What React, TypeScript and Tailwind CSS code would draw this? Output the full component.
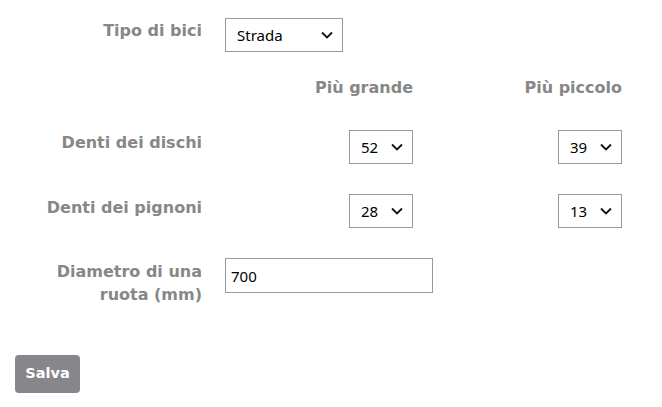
import React from "react";

function Chevron() {
  return (
    <svg
      className="pointer-events-none absolute right-[10px] top-1/2 -translate-y-1/2"
      width="12"
      height="8"
      viewBox="0 0 12 8"
      fill="none"
    >
      <path d="M1 1.5l5 5 5-5" stroke="#111" strokeWidth="1.8" />
    </svg>
  );
}

function Select({ value, options, width }: { value: string; options: string[]; width: string }) {
  return (
    <div className={`relative inline-block ${width}`}>
      <select
        defaultValue={value}
        className="h-[34px] w-full appearance-none border border-[#999] bg-white pl-[11px] pr-8 text-[15px] text-black outline-none"
      >
        {options.map((o) => (
          <option key={o}>{o}</option>
        ))}
      </select>
      <Chevron />
    </div>
  );
}

const label =
  "text-right pr-[23px] text-[16px] font-bold leading-[18px] text-[#878787] font-['DejaVu_Sans',sans-serif]";

export default function App() {
  return (
    <div className="min-h-screen bg-white pt-[18px] font-['Noto_Sans',sans-serif]">
      <div className="flex">
        <div className={`w-[225px] pt-[4px] ${label}`}>Tipo di bici</div>
        <Select value="Strada" options={["Strada", "Montagna", "Città"]} width="w-[118px]" />
      </div>

      <div className="mt-[27px] flex font-['DejaVu_Sans',sans-serif] text-[16px] font-bold leading-[18px] text-[#878787]">
        <div className="w-[225px]" />
        <div className="w-[188px] text-right">Più grande</div>
        <div className="w-[209px] text-right">Più piccolo</div>
      </div>

      <div className="mt-[33px] flex">
        <div className={`w-[225px] pt-[4px] ${label}`}>Denti dei dischi</div>
        <div className="flex w-[188px] justify-end">
          <Select value="52" options={["52", "53", "50"]} width="w-[64px]" />
        </div>
        <div className="flex w-[209px] justify-end">
          <Select value="39" options={["39", "36", "34"]} width="w-[64px]" />
        </div>
      </div>

      <div className="mt-[30px] flex">
        <div className={`w-[225px] pt-[5px] ${label}`}>Denti dei pignoni</div>
        <div className="flex w-[188px] justify-end">
          <Select value="28" options={["28", "25", "23"]} width="w-[64px]" />
        </div>
        <div className="flex w-[209px] justify-end">
          <Select value="13" options={["13", "11", "12"]} width="w-[64px]" />
        </div>
      </div>

      <div className="mt-[30px] flex">
        <div className={`w-[225px] pt-[2px] ${label} leading-[23px]`}>
          Diametro di una
          <br />
          ruota (mm)
        </div>
        <input
          defaultValue="700"
          className="h-[35px] w-[208px] border border-[#999] bg-white px-[5px] text-[15px] text-black outline-none"
        />
      </div>

      <div className="mt-[49px] pl-[15px]">
        <button className="h-[38px] w-[65px] rounded-[4px] bg-[#86868b] font-['DejaVu_Sans',sans-serif] text-[14.5px] font-bold text-white">
          Salva
        </button>
      </div>
    </div>
  );
}
